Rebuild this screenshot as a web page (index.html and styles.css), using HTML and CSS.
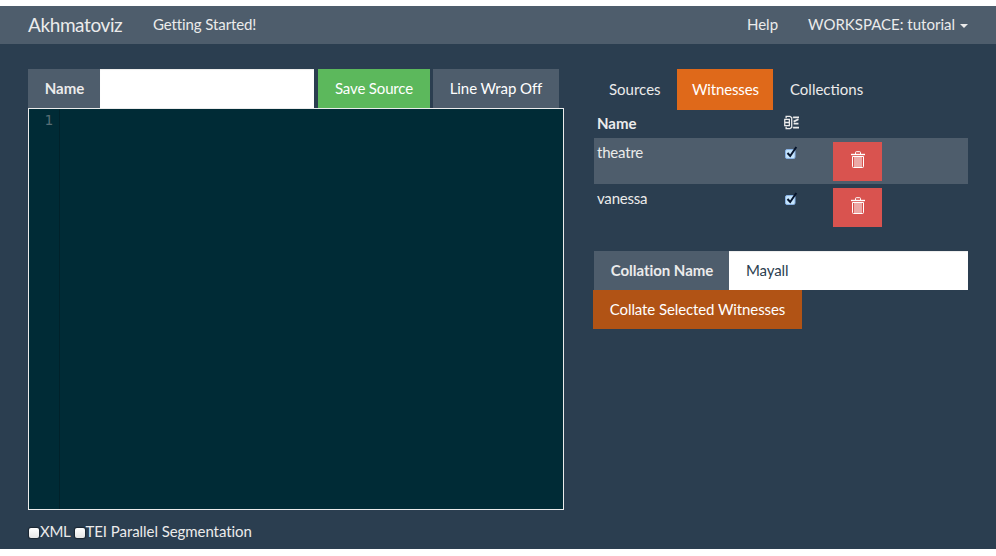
FILE: index.html
```html
<!DOCTYPE html>
<html lang="en">
<head>
<meta charset="utf-8">
<title>Akhmatoviz</title>
<link rel="stylesheet" href="styles.css">
</head>
<body>
<svg class="defs" width="0" height="0">
  <symbol id="trash" viewBox="0 0 14 17">
    <path d="M0 3.500h14" fill="none" stroke="currentColor" stroke-width="1.400"/>
    <path d="M4.500 3V1.500q0-.8.8-.8h3.400q.8 0 .8.800V3M1.500 5.500h11v10q0 1-1 1h-9q-1 0-1-1zM4 6v10M6 6v10M8 6v10M10 6v10" fill="none" stroke="currentColor"/>
  </symbol>
  <symbol id="check" viewBox="0 0 14 14">
    <rect x="1.500" y="3.500" width="9.500" height="9" rx="1.500" fill="#c5e4fb" stroke="#8ab4e8"/>
    <path d="M3.500 7l2.700 3L12.300 1" fill="none" stroke="#06142c" stroke-width="2"/>
  </symbol>
</svg>
<nav class="navbar">
  <a class="brand">Akhmatoviz</a>
  <a class="start">Getting Started!</a>
  <a class="help">Help</a>
  <a class="workspace">WORKSPACE: tutorial<i class="caret"></i></a>
</nav>
<main class="page">
  <section class="editor">
    <div class="toolbar">
      <label class="addon" for="src">Name</label>
      <input id="src" class="field source">
      <button class="btn save">Save Source</button>
      <button class="btn wrap">Line Wrap Off</button>
    </div>
    <div class="code"><div class="gutter">1</div></div>
    <div class="options">
      <i class="box"></i><span class="xml">XML</span>
      <i class="box"></i><span class="tei">TEI Parallel Segmentation</span>
    </div>
  </section>
  <section class="side">
    <div class="tabs">
      <a class="tab sources">Sources</a>
      <a class="tab active">Witnesses</a>
      <a class="tab collections">Collections</a>
    </div>
    <div class="row head">
      <b>Name</b>
      <svg class="collate" viewBox="0 0 14 14" fill="none" stroke="currentColor" stroke-width="1.200"><path d="M2 3V1.200h3.500L7.200 2.500v9L5.500 12.800H2V11M.700 4h4.300v6H.700zM.700 7H5"/><path d="M8.500 2.200H14M9 6.200L13.500 4M9 8h4.500M8.500 11.800H14" stroke-width="1.700"/></svg>
    </div>
    <div class="row striped">
      <span>theatre</span>
      <svg class="check"><use href="#check"/></svg>
      <button class="del"><svg class="trash"><use href="#trash"/></svg></button>
    </div>
    <div class="row">
      <span>vanessa</span>
      <svg class="check"><use href="#check"/></svg>
      <button class="del"><svg class="trash"><use href="#trash"/></svg></button>
    </div>
    <div class="collation">
      <label class="addon wide" for="col">Collation Name</label>
      <input id="col" class="field name" value="Mayall">
    </div>
    <button class="btn go">Collate Selected Witnesses</button>
  </section>
</main>
</body>
</html>
```
FILE: styles.css
```css
* { box-sizing: border-box; }
body { margin: 0; padding-top: 6px; background: #fff; color: #ebebeb; font: 15px/21px Lato, sans-serif; }
.defs { display: block; }
.navbar { display: flex; align-items: center; height: 38px; padding: 0 28px 2px; background: #4e5d6c; white-space: nowrap; }
.brand { width: 125px; font-size: 19px; letter-spacing: -.4px; }
.start { letter-spacing: -.1px; }
.help { margin-left: auto; margin-right: 30px; }
.caret { display: inline-block; margin-left: 5px; border: 4px solid transparent; border-top-color: currentColor; border-bottom: 0; vertical-align: 2px; }
.page { display: flex; gap: 30px; height: 505px; padding: 25px 28px 0; background: #2b3e50; }
.editor { width: 536px; }
.side { width: 374px; }
.toolbar, .collation, .tabs { display: flex; }
.addon { width: 72px; height: 39px; padding-left: 1px; background: #4e5d6c; font-weight: 700; line-height: 39px; text-align: center; }
.field { height: 39px; padding: 0 17px 2px; border: 0; border-radius: 0; background: #fff; box-shadow: inset 0 1px 1px rgba(0,0,0,.075); color: #2b3e50; font: 15px Lato, sans-serif; }
.source { width: 214px; }
.btn { height: 39px; padding: 0 0 2px; border: 0; color: #fff; font: 15px Lato, sans-serif; white-space: nowrap; }
.save { width: 112px; margin-left: 4px; background: #5cb85c; letter-spacing: -.15px; }
.wrap { width: 126px; margin-left: 3px; background: #4e5d6c; letter-spacing: -.08px; }
.code { height: 402px; border: 1px solid #ebebeb; background: #002b36; }
.gutter { width: 31px; height: 400px; padding: 1px 6px 0 0; border-right: 1px solid #01222b; color: #586e75; font: 14px/20px "DejaVu Sans Mono", monospace; text-align: right; }
.options { display: flex; align-items: center; height: 42px; }
.box { width: 10px; height: 10px; margin: 3px 1px 0; border-radius: 2px; background: linear-gradient(#fff, #e5e5e5); box-shadow: 0 0 1px 1px rgba(0,0,0,.4); }
.xml { margin-right: 4px; letter-spacing: -.3px; }
.tei { margin-left: -1px; letter-spacing: -.06px; }
.tab { height: 41px; padding: 0 15px; line-height: 41px; }
.sources { width: 83px; }
.active { width: 96px; background: #df691a; color: #fff; letter-spacing: -.15px; }
.collections { padding-left: 17px; }
.row { display: grid; grid-template-columns: 187px 49px 49px; height: 46px; padding: 4px 3px; }
.row span { letter-spacing: -.2px; }
.head { height: 28px; padding-top: 3px; }
.collate { width: 15px; height: 15px; margin-top: 2px; }
.striped { background: #4e5d6c; }
.check { width: 14px; height: 14px; margin-top: 4px; }
.del { height: 39px; padding: 0 0 4px; border: 0; background: #d9534f; color: #fff; }
.trash { display: block; width: 14px; height: 17px; margin: 0 auto; }
.collation { margin-top: 21px; }
.wide { width: 135px; letter-spacing: -.04px; }
.name { width: 239px; letter-spacing: -.1px; }
.go { width: 209px; margin-left: -1px; background: #b15315; letter-spacing: -.1px; }
```
